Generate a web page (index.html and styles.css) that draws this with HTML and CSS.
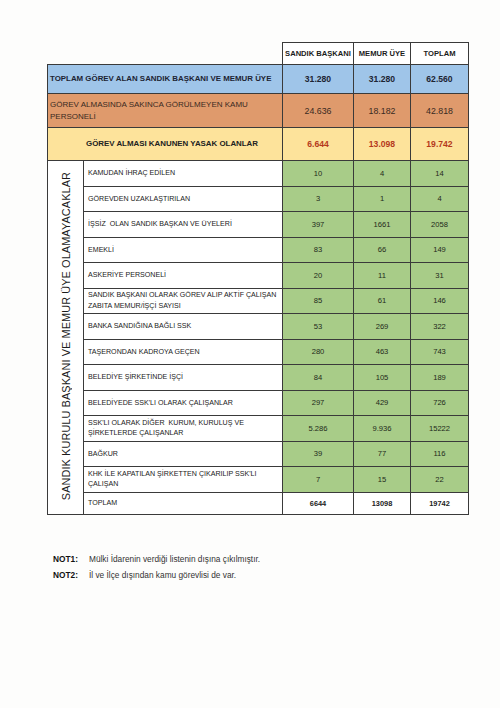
FILE: index.html
```html
<!DOCTYPE html>
<html lang="tr">
<head>
<meta charset="utf-8">
<title>Sandık Kurulu</title>
<link rel="stylesheet" href="styles.css">
</head>
<body>
<div class="page">
<table class="grid">
  <colgroup>
    <col class="c-side"><col class="c-label"><col class="c-sb"><col class="c-mu"><col class="c-tp">
  </colgroup>
  <tr class="head">
    <td class="blank" colspan="2"></td>
    <th>SANDIK BAŞKANI</th><th>MEMUR ÜYE</th><th>TOPLAM</th>
  </tr>
  <tr class="blue">
    <td class="lbl wide" colspan="2">TOPLAM GÖREV ALAN SANDIK BAŞKANI VE MEMUR ÜYE</td>
    <td class="num">31.280</td><td class="num">31.280</td><td class="num">62.560</td>
  </tr>
  <tr class="orange">
    <td class="lbl wide" colspan="2">GÖREV ALMASINDA SAKINCA GÖRÜLMEYEN KAMU<br>PERSONELİ</td>
    <td class="num">24.636</td><td class="num">18.182</td><td class="num">42.818</td>
  </tr>
  <tr class="yellow">
    <td class="lbl ind" colspan="2">GÖREV ALMASI KANUNEN YASAK OLANLAR</td>
    <td class="num">6.644</td><td class="num">13.098</td><td class="num">19.742</td>
  </tr>
  <tr class="g">
    <td class="side" rowspan="14"><span>SANDIK KURULU BAŞKANI VE MEMUR ÜYE OLAMAYACAKLAR</span></td>
    <td class="item">KAMUDAN İHRAÇ EDİLEN</td><td>10</td><td>4</td><td>14</td>
  </tr>
  <tr class="g"><td class="item">GÖREVDEN UZAKLAŞTIRILAN</td><td>3</td><td>1</td><td>4</td></tr>
  <tr class="g"><td class="item">İŞSİZ &nbsp;OLAN SANDIK BAŞKAN VE ÜYELERİ</td><td>397</td><td>1661</td><td>2058</td></tr>
  <tr class="g"><td class="item">EMEKLİ</td><td>83</td><td>66</td><td>149</td></tr>
  <tr class="g"><td class="item">ASKERİYE PERSONELİ</td><td>20</td><td>11</td><td>31</td></tr>
  <tr class="g"><td class="item">SANDIK BAŞKANI OLARAK GÖREV ALIP AKTİF ÇALIŞAN<br>ZABITA MEMUR/İŞÇİ SAYISI</td><td>85</td><td>61</td><td>146</td></tr>
  <tr class="g"><td class="item">BANKA SANDIĞINA BAĞLI SSK</td><td>53</td><td>269</td><td>322</td></tr>
  <tr class="g"><td class="item">TAŞERONDAN KADROYA GEÇEN</td><td>280</td><td>463</td><td>743</td></tr>
  <tr class="g"><td class="item">BELEDİYE ŞİRKETİNDE İŞÇİ</td><td>84</td><td>105</td><td>189</td></tr>
  <tr class="g"><td class="item">BELEDİYEDE SSK'LI OLARAK ÇALIŞANLAR</td><td>297</td><td>429</td><td>726</td></tr>
  <tr class="g"><td class="item">SSK'LI OLARAK DİĞER &nbsp;KURUM, KURULUŞ VE<br>ŞİRKETLERDE ÇALIŞANLAR</td><td>5.286</td><td>9.936</td><td>15222</td></tr>
  <tr class="g"><td class="item">BAĞKUR</td><td>39</td><td>77</td><td>116</td></tr>
  <tr class="g"><td class="item">KHK İLE KAPATILAN ŞİRKETTEN ÇIKARILIP SSK'LI<br>ÇALIŞAN</td><td>7</td><td>15</td><td>22</td></tr>
  <tr class="total"><td class="item">TOPLAM</td><td>6644</td><td>13098</td><td>19742</td></tr>
</table>

<div class="notes">
  <p class="note"><b>NOT1:</b><span>Mülki İdarenin verdiği listenin dışına çıkılmıştır.</span></p>
  <p class="note"><b>NOT2:</b><span>İl ve İlçe dışından kamu görevlisi de var.</span></p>
</div>
</div>
</body>
</html>
```
FILE: styles.css
```css
html, body {
  margin: 0;
  background: #fdfdfc;
}
.page {
  width: 500px;
  height: 708px;
  padding: 42px 0 0 47px;
  box-sizing: border-box;
  font-family: "Liberation Sans", Arial, sans-serif;
  color: #222;
}
.grid {
  border-collapse: collapse;
  table-layout: fixed;
  width: 421px;
}
.c-side { width: 36px; }
.c-label { width: 199px; }
.c-sb { width: 71px; }
.c-mu { width: 57px; }
.c-tp { width: 58px; }

.grid td, .grid th {
  border: 1px solid #3a3a3a;
  padding: 0;
  text-align: center;
  vertical-align: middle;
}
.grid td.blank {
  border: none;
  border-bottom: 1px solid #3a3a3a;
}
.head th {
  height: 21px;
  font-size: 7.6px;
  font-weight: bold;
  background: #fff;
  color: #1c1c1c;
}
.num {
  font-size: 8.6px;
  font-weight: bold;
}
.lbl {
  text-align: left !important;
  font-size: 7.9px;
  font-weight: bold;
  line-height: 12px;
}
.wide { padding-left: 2px !important; }
.ind { padding-left: 38px !important; }

.blue td { background: #9fc5e9; height: 28px; color: #1d2433; }
.orange td { background: #df9a6c; height: 33px; color: #3a2a22; }
.orange .lbl { font-weight: normal; font-size: 8px; }
.orange .num { font-weight: normal; font-size: 8.8px; }
.yellow td { background: #fde39b; height: 32px; }
.yellow .num { color: #b5391c; }

.g td.side {
  background: #fff;
}
.side span {
  display: inline-block;
  writing-mode: vertical-rl;
  transform: rotate(180deg);
  font-size: 10.9px;
  color: #1c1c1c;
  letter-spacing: 0.1px;
}
.g td {
  background: #a8cc88;
  height: 24.5px;
  font-size: 7.6px;
  color: #1e2a1a;
}
.g td.item, .total td.item {
  background: #fff;
  text-align: left;
  padding-left: 4px;
  font-size: 7.1px;
  line-height: 10.5px;
  color: #222;
}
.total td {
  background: #fff;
  height: 21px;
  font-size: 7.4px;
  font-weight: bold;
}
.total td.item { font-weight: normal; }

.notes {
  margin: 39px 0 0 6px;
}
.note {
  margin: 0 0 6px;
  font-size: 8.3px;
  line-height: 10px;
  display: flex;
}
.note b {
  width: 36px;
  color: #111;
}
.note span {
  color: #333;
}
```
